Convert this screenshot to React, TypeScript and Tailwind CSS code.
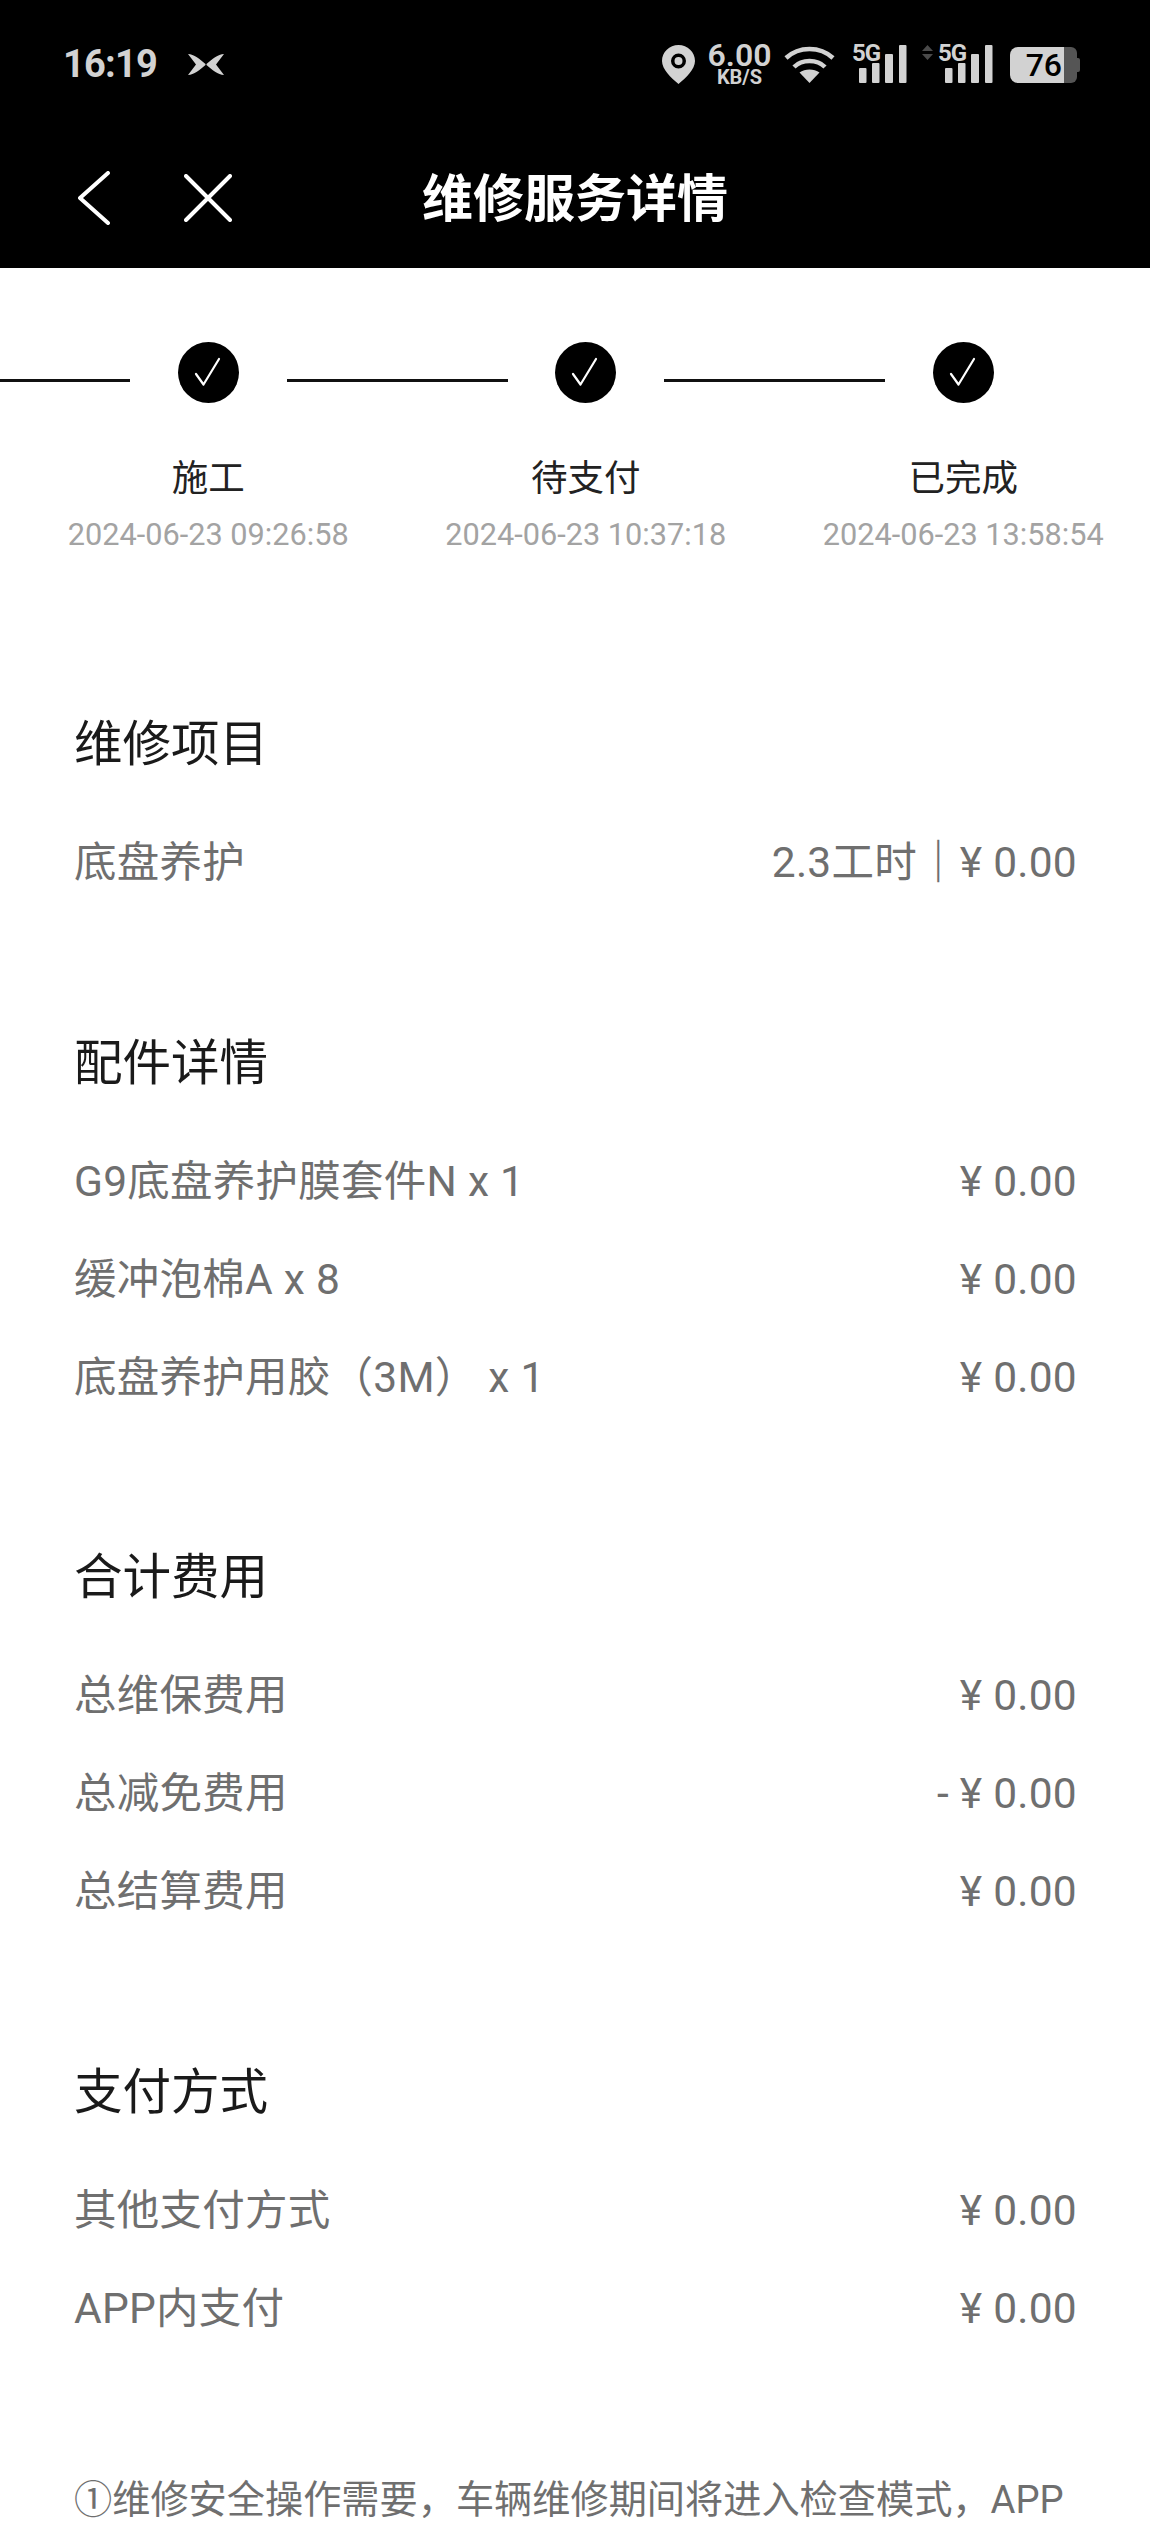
const font = "font-['Roboto','Noto_Sans_CJK_SC',sans-serif]";

const steps = [
  { label: '施工', time: '2024-06-23 09:26:58' },
  { label: '待支付', time: '2024-06-23 10:37:18' },
  { label: '已完成', time: '2024-06-23 13:58:54' },
];

const sections = [
  { title: '维修项目', rows: [['底盘养护', '¥ 0.00', '2.3工时']] },
  {
    title: '配件详情',
    rows: [
      ['G9底盘养护膜套件N x 1', '¥ 0.00'],
      ['缓冲泡棉A x 8', '¥ 0.00'],
      ['底盘养护用胶（3M） x 1', '¥ 0.00'],
    ],
  },
  {
    title: '合计费用',
    rows: [
      ['总维保费用', '¥ 0.00'],
      ['总减免费用', '- ¥ 0.00'],
      ['总结算费用', '¥ 0.00'],
    ],
  },
  {
    title: '支付方式',
    rows: [
      ['其他支付方式', '¥ 0.00'],
      ['APP内支付', '¥ 0.00'],
    ],
  },
];

function Signal({ arrows }: { arrows?: boolean }) {
  return (
    <div className="relative h-[39px] w-[55px]">
      {arrows && (
        <svg className="absolute -left-[16px] top-0" width="11" height="15" viewBox="0 0 11 15" fill="#4a4a4a">
          <path d="M5.5 0 11 6H0zM0 9h11l-5.5 6z" />
        </svg>
      )}
      <span className="absolute left-0 top-[-5px] text-[24px] font-bold leading-[27px] tracking-[-1px] text-[#d2d2d2]">5G</span>
      <svg className="absolute left-0 top-0" width="55" height="39" viewBox="0 0 55 39" fill="#d2d2d2">
        <rect x="7" y="23" width="7.5" height="15" rx="1" />
        <rect x="20" y="18" width="7.5" height="20" rx="1" />
        <rect x="33" y="9" width="8" height="29" rx="1" />
        <rect x="47" y="0" width="7.5" height="38" rx="1" />
      </svg>
    </div>
  );
}

function StatusBar() {
  return (
    <div className="flex h-[128px] items-center pl-[63px] pr-[70px] text-[#d2d2d2]">
      <span className="text-[38px] font-bold leading-none tracking-[-0.8px]">16:19</span>
      <svg className="ml-[31px]" width="36" height="21" viewBox="0 0 36 21" fill="#d2d2d2">
        <path d="M0 0C6 .5 12 5 17.5 10v1C12 16 6 20.5 0 21L8 10.5ZM36 0C30 .5 24 5 18.5 10v1C24 16 30 20.5 36 21L28 10.5Z" />
      </svg>
      <div className="ml-auto flex items-center">
        <svg width="33" height="39" viewBox="0 0 33 39">
          <path
            fill="#d2d2d2"
            fillRule="evenodd"
            d="M16.5 0C7.4 0 0 7.2 0 16c0 8 9 17 16.5 23C24 33 33 24 33 16 33 7.2 25.6 0 16.5 0Zm0 8.5a7.5 7.5 0 1 1 0 15 7.5 7.5 0 0 1 0-15Zm0 3.5a4 4 0 1 0 0 8 4 4 0 0 0 0-8Z"
          />
        </svg>
        <div className="ml-[13px] flex w-[63px] flex-col items-center">
          <span className="text-[32px] font-semibold leading-[25px]">6.00</span>
          <span className="text-[20px] font-bold leading-[18px]">KB/S</span>
        </div>
        <svg className="ml-[13px]" width="51" height="37" viewBox="0 0 51 37" fill="none" stroke="#d2d2d2" strokeWidth="4.5">
          <path d="M2 12C15 0 36 0 49 12" />
          <path d="M10 21C18 13 33 13 41 21" />
          <path fill="#d2d2d2" stroke="none" d="M15.5 26.5C21 22.5 30 22.5 35.5 26.5L25.5 37Z" />
        </svg>
        <div className="ml-[17px]">
          <Signal />
        </div>
        <div className="ml-[31px]">
          <Signal arrows />
        </div>
        <div className="relative ml-[17px] mt-[2px] flex h-[36px] w-[70px]">
          <div className="flex w-[54px] items-center justify-end rounded-l-[8px] bg-[#d2d2d2] pr-[2px] text-[32px] font-medium leading-none text-black">76</div>
          <div className="w-[13px] rounded-r-[6px] bg-[#555]" />
          <div className="my-auto h-[14px] w-[3px] rounded-r-[2px] bg-[#555]" />
        </div>
      </div>
    </div>
  );
}

function NavBar() {
  return (
    <div className="grid h-[140px] grid-cols-[1fr_auto_1fr] items-center">
      <div className="flex items-center pl-[78px]">
        <svg width="32" height="54" viewBox="0 0 32 54" fill="none" stroke="#fff" strokeWidth="4" strokeLinecap="round" strokeLinejoin="round">
          <path d="M30 2 2 27l28 25" />
        </svg>
        <svg className="ml-[74px]" width="48" height="48" viewBox="0 0 48 48" fill="none" stroke="#fff" strokeWidth="4" strokeLinecap="round">
          <path d="M2 2 46 46M46 2 2 46" />
        </svg>
      </div>
      <h1 className="mt-[2px] text-[51px] font-bold leading-none text-white">维修服务详情</h1>
      <div />
    </div>
  );
}

function Stepper() {
  return (
    <div className="overflow-hidden pt-[74px]">
      <div className="ml-[-91px] flex">
        {steps.map((step) => (
          <div key={step.label} className="flex w-[377.5px] shrink-0 items-start">
            <div className="mt-[37px] h-[3px] w-[221px] bg-[#111]" />
            <svg className="ml-[47.5px]" width="61" height="61" viewBox="0 0 61 61">
              <circle cx="30.5" cy="30.5" r="30.5" fill="#000" />
              <path d="M18 32l7.5 10.5L41 17" fill="none" stroke="#fff" strokeWidth="2.2" strokeLinecap="round" strokeLinejoin="round" />
            </svg>
          </div>
        ))}
      </div>
      <div className="ml-[19.5px] mt-[51px] flex">
        {steps.map((step) => (
          <div key={step.label} className="flex w-[377.5px] shrink-0 flex-col items-center">
            <span className="text-[36.5px] leading-[50px] text-[#222]">{step.label}</span>
            <span className="mt-[6px] text-[30.7px] leading-[50px] text-[#a3a3a3]">{step.time}</span>
          </div>
        ))}
      </div>
    </div>
  );
}

export default function App() {
  return (
    <div className={`h-[2530px] w-[1150px] overflow-hidden bg-white ${font}`}>
      <header className="bg-black">
        <StatusBar />
        <NavBar />
      </header>
      <Stepper />
      <main className="pl-[74px] pr-[73px] pt-[155px]">
        {sections.map((section) => (
          <section key={section.title} className="mb-[121.5px]">
            <h2 className="mb-[39px] text-[48.5px] font-normal leading-[60px] text-[#1a1a1a]">{section.title}</h2>
            {section.rows.map(([name, value, hours]) => (
              <div key={name} className="flex h-[98px] items-center justify-between text-[42.5px] tracking-[0.25px] text-[#6f6f6f]">
                <span>{name}</span>
                <span>
                  {hours && (
                    <>
                      {hours}
                      <span className="font-bold">｜</span>
                    </>
                  )}
                  {value}
                </span>
              </div>
            ))}
          </section>
        ))}
        <p className="mt-[-9px] text-[38.2px] leading-[60px] text-[#6f6f6f]">①维修安全操作需要，车辆维修期间将进入检查模式，APP</p>
      </main>
    </div>
  );
}
